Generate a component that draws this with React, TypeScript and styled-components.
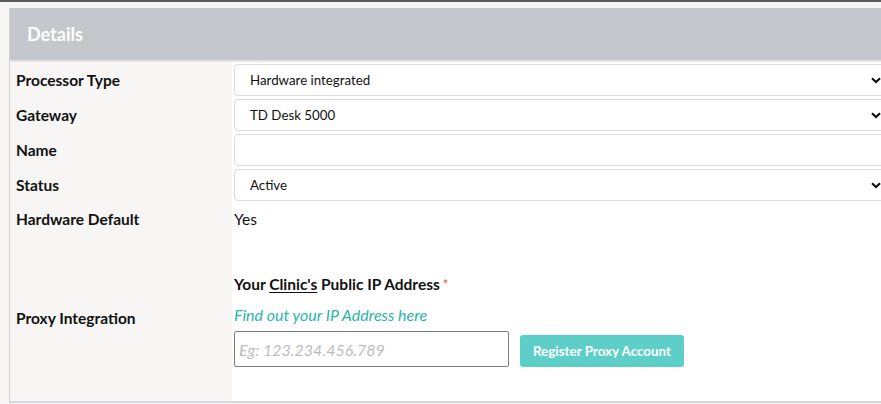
import { createGlobalStyle } from "styled-components";
import styled from "styled-components";

const GlobalStyle = createGlobalStyle`
  html, body {
    margin: 0;
    padding: 0;
    background: #f8f7f5;
    overflow: hidden;
    font-family: Lato, "Open Sans", sans-serif;
    color: #111;
  }
`;

const TopBar = styled.div`
  height: 2px;
  background: #5a5a5a;
`;

const Page = styled.div`
  padding: 6px 0 0 9px;
`;

const Panel = styled.div`
  width: 884px;
  border-left: 1px solid #cfd0d6;
  border-bottom: 2px solid #d6d7dc;
  background: #fff;
`;

const Header = styled.div`
  height: 52px;
  background: #c4c7cb;
  border-bottom: 2px solid #e2e3e5;
  display: flex;
  align-items: center;
  padding-left: 17px;
  color: #fff;
  font-size: 18px;
  font-weight: 700;
`;

const Grid = styled.div`
  display: grid;
  grid-template-columns: 222px 1fr;
`;

const Label = styled.div<{ $h: number }>`
  height: ${(p) => p.$h}px;
  background: #f7f6f4;
  display: flex;
  align-items: center;
  padding-left: 6px;
  font-size: 15.5px;
  font-weight: 700;
`;

const Cell = styled.div<{ $h: number }>`
  height: ${(p) => p.$h}px;
  box-sizing: border-box;
  padding: 2px 0 0 2px;
`;

const PlainCell = styled(Cell)`
  padding-top: 0;
  display: flex;
  align-items: center;
`;

const SelectBox = styled.div`
  position: relative;
  width: 100%;
  height: 32px;
  box-sizing: border-box;
  border: 1px solid #dcdcdc;
  border-radius: 4px;
  display: flex;
  align-items: center;
  padding-left: 15px;
  font-size: 13.3px;
  color: #111;
  background: #fff;
`;

const Chevron = styled.svg`
  position: absolute;
  right: 12px;
  top: 12px;
`;

const Plain = styled.div`
  font-size: 15.5px;
`;

const Proxy = styled.div`
  height: 166px;
  box-sizing: border-box;
  padding: 40px 0 0 2px;
`;

const Title = styled.div`
  font-size: 15.5px;
  font-weight: 700;
  line-height: 18px;
  margin-bottom: 13px;
  u {
    text-decoration: underline;
    text-underline-offset: 2px;
  }
`;

const Req = styled.span`
  color: #e8552b;
  font-weight: 400;
  font-size: 13px;
  vertical-align: top;
  margin-left: 3px;
`;

const FindLink = styled.div`
  font-size: 16px;
  font-style: italic;
  color: #2cb4a9;
  line-height: 18px;
  margin-bottom: 7px;
`;

const InputRow = styled.div`
  display: flex;
  align-items: flex-end;
  gap: 11px;
`;

const IpInput = styled.input`
  width: 275px;
  height: 36px;
  box-sizing: border-box;
  border: 1px solid #7d7d7d;
  border-radius: 2px;
  padding: 0 4px;
  font-family: Lato, sans-serif;
  font-size: 16px;
  font-style: italic;
  outline: none;
  &::placeholder {
    color: #bdbdbd;
  }
`;

const RegisterButton = styled.button`
  height: 32px;
  width: 164px;
  border: none;
  border-radius: 3px;
  background: #5ecfc8;
  color: #fff;
  font-family: Lato, sans-serif;
  font-size: 13.4px;
  font-weight: 700;
  padding: 0;
`;

const Select = ({ value }: { value: string }) => (
  <SelectBox>
    {value}
    <Chevron width="10" height="7" viewBox="0 0 10 7">
      <path d="M1 1.2 L5 5 L9 1.2" stroke="#111" strokeWidth="2.2" fill="none" />
    </Chevron>
  </SelectBox>
);

const rows = [
  { label: "Processor Type", value: "Hardware integrated", select: true },
  { label: "Gateway", value: "TD Desk 5000", select: true },
  { label: "Name", value: "", select: false },
  { label: "Status", value: "Active", select: true },
];

export default function App() {
  return (
    <>
      <GlobalStyle />
      <TopBar />
      <Page>
        <Panel>
          <Header>Details</Header>
          <Grid>
            {rows.map((r) => [
              <Label key={r.label + "l"} $h={35}>
                {r.label}
              </Label>,
              <Cell key={r.label + "c"} $h={35}>
                {r.select ? <Select value={r.value} /> : <SelectBox />}
              </Cell>,
            ])}
            <Label $h={33}>Hardware Default</Label>
            <PlainCell $h={33}>
              <Plain>Yes</Plain>
            </PlainCell>
            <Label $h={166}>Proxy Integration</Label>
            <Proxy>
              <Title>
                Your <u>Clinic's</u> Public IP Address<Req>*</Req>
              </Title>
              <FindLink>Find out your IP Address here</FindLink>
              <InputRow>
                <IpInput placeholder="Eg: 123.234.456.789" />
                <RegisterButton>Register Proxy Account</RegisterButton>
              </InputRow>
            </Proxy>
          </Grid>
        </Panel>
      </Page>
    </>
  );
}
